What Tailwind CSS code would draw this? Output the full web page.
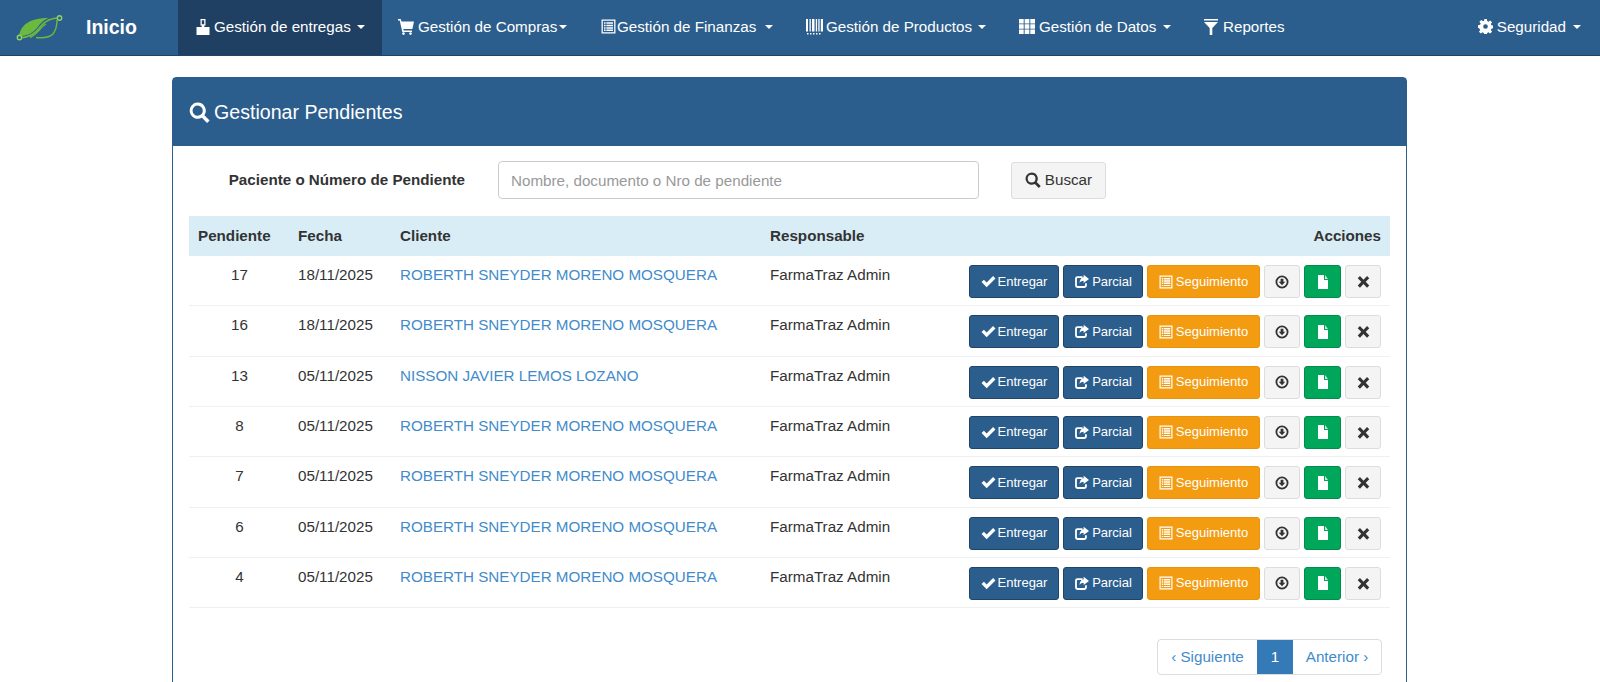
<!DOCTYPE html>
<html lang="es">
<head>
<meta charset="utf-8">
<title>Gestionar Pendientes</title>
<script src="https://cdn.jsdelivr.net/npm/@tailwindcss/browser@4"></script>
</head>
<body class="bg-white text-[15.2px] leading-[20px] text-[#333] font-['Liberation_Sans',Arial,sans-serif] h-screen overflow-hidden">
<svg class="hidden" xmlns="http://www.w3.org/2000/svg">
  <symbol id="i-check" viewBox="0 0 14 14"><path d="M.5 7.500 2.700 5.300 5.300 7.900 11.300 1.900 13.500 4.100 5.300 12.300z" fill="currentColor"/></symbol>
  <symbol id="i-share" viewBox="0 0 14 14"><path d="M8 2H3.200A2.200 2.200 0 0 0 1 4.200v6.600A2.200 2.200 0 0 0 3.200 13h6.600a2.200 2.200 0 0 0 2.200-2.200V8.600h-1.700v2a.7.7 0 0 1-.7.7H3.400a.7.7 0 0 1-.7-.7V4.400a.7.7 0 0 1 .7-.7H8z" fill="currentColor"/><path d="M9 .8l5 3.800L9 8.400V6.200C7.400 6.200 6 6.800 5.200 8.600 5.200 5.600 6.800 3.400 9 3.100z" fill="currentColor"/></symbol>
  <symbol id="i-list" viewBox="0 0 14 14"><path fill-rule="evenodd" d="M.5.500h13v13H.5zM1.700 1.700v10.600h10.600V1.700zM2.800 3h1.500v1.400H2.800zM5 3h6.200v1.400H5zM2.800 5.300h1.500v1.400H2.800zM5 5.300h6.200v1.400H5zM2.800 7.600h1.500V9H2.800zM5 7.600h6.200V9H5zM2.800 9.900h1.500v1.200H2.800zM5 9.900h6.200v1.200H5z" fill="currentColor"/></symbol>
  <symbol id="i-down" viewBox="0 0 14 14"><path fill-rule="evenodd" d="M7 .5a6.500 6.500 0 1 0 0 13 6.500 6.500 0 0 0 0-13zm0 1.800a4.700 4.700 0 1 1 0 9.400 4.700 4.700 0 0 1 0-9.400zM5.600 3.800v3H3.700L7 10.300 10.300 6.800H8.400v-3z" fill="currentColor"/></symbol>
  <symbol id="i-file" viewBox="0 0 14 14"><path d="M2 0h6v5h4v9H2z" fill="currentColor"/><path d="M9 0l3 4H9z" fill="currentColor" opacity=".75"/></symbol>
  <symbol id="i-x" viewBox="0 0 14 14"><path d="M3.200 1.200 7 5l3.800-3.800 2.400 2.400L9.400 7.400l3.800 3.800-2.400 2.400L7 9.800l-3.800 3.800-2.400-2.400 3.800-3.800-3.800-3.800z" fill="currentColor"/></symbol>
  <symbol id="i-search" viewBox="0 0 16 16"><path fill-rule="evenodd" d="M6.600.4a6.200 6.200 0 0 1 5.100 9.700l4 4-1.900 1.900-4-4A6.200 6.200 0 1 1 6.600.4zm0 2.300a3.900 3.900 0 1 0 0 7.800 3.900 3.900 0 0 0 0-7.800z" fill="currentColor"/></symbol>
  <symbol id="i-caret" viewBox="0 0 8 4"><path d="M0 0h8L4 4z" fill="currentColor"/></symbol>
</svg>

<nav class="h-[56px] bg-[#2c5e8d] border-b border-[#1f4468] flex text-white">
  <a class="w-[178px] flex items-center shrink-0 pb-[2px]">
    <svg class="ml-[15px] w-[48px] h-[28px]" viewBox="0 0 48 28" fill="none">
      <path d="M4 23C6 12 14 5 34 5 28 7 26 10 22 15 18 20 12 23 4 23z" fill="#6cb93f"/>
      <path d="M4 25C14 25 21 20 26 13 31 7 36 5 44 5" stroke="#6cb93f" stroke-width="1.600"/>
      <path d="M21 24.500C27 25 34 25 38 21 41 17 42 12 42 7M15 24.500C24 20 24 15 31 11" stroke="#6cb93f" stroke-width="1.400"/>
      <circle cx="4.500" cy="24.500" r="2.200" stroke="#8ed163" stroke-width="1.400" fill="#2c5e8d"/>
      <circle cx="44.500" cy="5" r="2.200" stroke="#8ed163" stroke-width="1.400" fill="#2c5e8d"/>
    </svg>
    <span class="ml-[23px] text-[19.5px] font-bold">Inicio</span>
  </a>
  <a class="w-[204px] bg-[#1f3f63] flex items-center pl-[18px] gap-[4px] shrink-0 pb-[2px]">
    <svg class="w-[14px] h-[16px]" viewBox="0 0 14 16"><path fill-rule="evenodd" d="M4.500 0h5v6.500H8.300V8H13.500v8H.5V8h5.200V6.500H4.500zM5.800 1.300v3.900h2.400V1.300z" fill="currentColor"/></svg>
    <span>Gestión de entregas</span><svg class="w-[8px] h-[4px] ml-[2px]"><use href="#i-caret"/></svg>
  </a>
  <a class="w-[200px] flex items-center pl-[16px] gap-[4px] shrink-0 pb-[2px]">
    <svg class="w-[16px] h-[16px]" viewBox="0 0 16 16"><path d="M0 0h2.700l.8 2.500H16l-1.600 7.500H5.300l.4 1.500H14V13H4.300L1.700 1.500H0z" fill="currentColor"/><circle cx="5.500" cy="14.600" r="1.300" fill="currentColor"/><circle cx="12.500" cy="14.600" r="1.300" fill="currentColor"/></svg>
    <span>Gestión de Compras</span><svg class="w-[8px] h-[4px] -ml-[2px]"><use href="#i-caret"/></svg>
  </a>
  <a class="w-[205px] flex items-center pl-[19px] gap-[1px] shrink-0 pb-[2px]">
    <svg class="w-[15px] h-[15px]"><use href="#i-list"/></svg>
    <span>Gestión de Finanzas</span><svg class="w-[8px] h-[4px] ml-[8px]"><use href="#i-caret"/></svg>
  </a>
  <a class="w-[218px] flex items-center pl-[19px] gap-[3px] shrink-0 pb-[2px]">
    <svg class="w-[17px] h-[16px]" viewBox="0 0 17 16"><path d="M0 0h2v12.500H0zM3.500 0h1.300v12.500H3.500zM6 0h2.500v12.500H6zM9.800 0h1.300v12.500H9.800zM12.300 0h1.300v12.500h-1.300zM14.800 0H17v12.500h-2.200zM1 14h1.500v1.500H1zM4 14h1.500v1.500H4zM7 14h1.500v1.500H7zM10 14h1.500v1.500H10zM13 14h1.500v1.500H13z" fill="currentColor"/></svg>
    <span>Gestión de Productos</span><svg class="w-[8px] h-[4px] ml-[3px]"><use href="#i-caret"/></svg>
  </a>
  <a class="w-[184px] flex items-center pl-[14px] gap-[4px] shrink-0 pb-[2px]">
    <svg class="w-[16px] h-[15px]" viewBox="0 0 16 15"><path d="M0 0h4.700v4.400H0zM5.650 0h4.700v4.400H5.650zM11.300 0H16v4.400h-4.700zM0 5.300h4.700v4.400H0zM5.650 5.300h4.700v4.400H5.650zM11.300 5.300H16v4.400h-4.700zM0 10.600h4.700V15H0zM5.650 10.600h4.700V15H5.650zM11.300 10.600H16V15h-4.700z" fill="currentColor"/></svg>
    <span>Gestión de Datos</span><svg class="w-[8px] h-[4px] ml-[3px]"><use href="#i-caret"/></svg>
  </a>
  <a class="flex items-center pl-[15px] gap-[5px] shrink-0 pb-[2px]">
    <svg class="w-[14px] h-[16px]" viewBox="0 0 14 16"><path d="M0 0h14v1.500H0zM0 3h14L8.300 9V16H5.700V9z" fill="currentColor"/></svg>
    <span>Reportes</span>
  </a>
  <a class="ml-auto flex items-center pr-[19px] gap-[4px] shrink-0 pb-[2px]">
    <svg class="w-[15px] h-[15px]" viewBox="0 0 16 16"><path fill-rule="evenodd" d="M6.600 0h2.800l.4 2.200 1.300.6 1.900-1.300 2 2-1.300 1.900.6 1.300 2.200.4v2.800l-2.200.4-.6 1.300 1.300 1.900-2 2-1.900-1.300-1.300.6-.4 2.200H6.600l-.4-2.200-1.300-.6-1.900 1.300-2-2 1.300-1.900-.6-1.300L0 9.400V6.600l2.200-.4.6-1.300-1.300-1.900 2-2 1.900 1.300 1.300-.6zM8 5.500a2.500 2.500 0 1 0 0 5 2.500 2.500 0 0 0 0-5z" fill="currentColor"/></svg>
    <span>Seguridad</span><svg class="w-[8px] h-[4px] ml-[3px]"><use href="#i-caret"/></svg>
  </a>
</nav>

<main class="ml-[172px] w-[1235px] mt-[21px] border border-[#2c5e8d] rounded-[4px] h-[800px]">
  <header class="h-[68px] bg-[#2c5e8d] text-white flex items-center pl-[16px] gap-[4px] text-[19.6px]">
    <svg class="w-[21px] h-[21px]"><use href="#i-search"/></svg>
    <h1 class="font-normal">Gestionar Pendientes</h1>
  </header>
  <div class="pl-[16px] pr-[16px]">
    <form class="flex items-center h-[70px] pb-[2px]">
      <label class="w-[277px] text-right font-bold pr-[1px]">Paciente o Número de Pendiente</label>
      <input class="ml-[32px] w-[481px] h-[38px] border border-[#ccc] rounded-[4px] px-[12px] text-[15.2px] placeholder:text-[#999]" placeholder="Nombre, documento o Nro de pendiente">
      <button type="button" class="ml-[32px] h-[37px] w-[95px] bg-[#f4f4f4] border border-[#ddd] rounded-[3px] flex items-center justify-center gap-[4px] text-[15.2px]">
        <svg class="w-[16px] h-[16px]"><use href="#i-search"/></svg>Buscar
      </button>
    </form>
    <table class="w-full border-collapse table-fixed">
      <colgroup><col class="w-[101px]"><col class="w-[102px]"><col class="w-[370px]"><col class="w-[190px]"><col></colgroup>
      <thead class="bg-[#d9edf7]">
        <tr class="h-[40px] text-left">
          <th class="pl-[9px] pr-[8px] font-bold">Pendiente</th><th class="px-[8px] font-bold">Fecha</th><th class="px-[8px] font-bold">Cliente</th><th class="px-[8px] font-bold">Responsable</th><th class="pl-[8px] pr-[9px] font-bold text-right">Acciones</th>
        </tr>
      </thead>
      <tbody>
        <tr class="border-b border-[#f0f0f0] align-top">
          <td class="px-[8px] pt-[9px] text-center">17</td><td class="px-[8px] pt-[9px]">18/11/2025</td><td class="px-[8px] pt-[9px]"><a class="text-[#428bca]">ROBERTH SNEYDER MORENO MOSQUERA</a></td><td class="px-[8px] pt-[9px]">FarmaTraz Admin</td>
          <td class="pt-[9px] pb-[7.33px] pr-[9px]"><div class="flex justify-end gap-[4px] text-[13px] leading-[18px] text-white">
            <a class="h-[33px] w-[90px] bg-[#2c5e8d] border border-[#1f4468] rounded-[3px] flex items-center justify-center gap-[2px]"><svg class="w-[15px] h-[15px]"><use href="#i-check"/></svg>Entregar</a>
            <a class="h-[33px] w-[80px] bg-[#2c5e8d] border border-[#1f4468] rounded-[3px] flex items-center justify-center gap-[3px]"><svg class="w-[15px] h-[15px]"><use href="#i-share"/></svg>Parcial</a>
            <a class="h-[33px] w-[113px] bg-[#f39c12] border border-[#e8930c] rounded-[3px] flex items-center justify-center gap-[3px]"><svg class="w-[14px] h-[14px]"><use href="#i-list"/></svg>Seguimiento</a>
            <a class="h-[33px] w-[36px] bg-[#f4f4f4] border border-[#ddd] rounded-[3px] flex items-center justify-center text-[#333]"><svg class="w-[14px] h-[14px]"><use href="#i-down"/></svg></a>
            <a class="h-[33px] w-[37px] bg-[#00a65a] border border-[#008d4c] rounded-[3px] flex items-center justify-center"><svg class="w-[14px] h-[14px]"><use href="#i-file"/></svg></a>
            <a class="h-[33px] w-[36px] bg-[#f4f4f4] border border-[#ddd] rounded-[3px] flex items-center justify-center text-[#333]"><svg class="w-[13px] h-[13px]"><use href="#i-x"/></svg></a>
          </div></td>
        </tr>
        <tr class="border-b border-[#f0f0f0] align-top">
          <td class="px-[8px] pt-[9px] text-center">16</td><td class="px-[8px] pt-[9px]">18/11/2025</td><td class="px-[8px] pt-[9px]"><a class="text-[#428bca]">ROBERTH SNEYDER MORENO MOSQUERA</a></td><td class="px-[8px] pt-[9px]">FarmaTraz Admin</td>
          <td class="pt-[9px] pb-[7.33px] pr-[9px]"><div class="flex justify-end gap-[4px] text-[13px] leading-[18px] text-white">
            <a class="h-[33px] w-[90px] bg-[#2c5e8d] border border-[#1f4468] rounded-[3px] flex items-center justify-center gap-[2px]"><svg class="w-[15px] h-[15px]"><use href="#i-check"/></svg>Entregar</a>
            <a class="h-[33px] w-[80px] bg-[#2c5e8d] border border-[#1f4468] rounded-[3px] flex items-center justify-center gap-[3px]"><svg class="w-[15px] h-[15px]"><use href="#i-share"/></svg>Parcial</a>
            <a class="h-[33px] w-[113px] bg-[#f39c12] border border-[#e8930c] rounded-[3px] flex items-center justify-center gap-[3px]"><svg class="w-[14px] h-[14px]"><use href="#i-list"/></svg>Seguimiento</a>
            <a class="h-[33px] w-[36px] bg-[#f4f4f4] border border-[#ddd] rounded-[3px] flex items-center justify-center text-[#333]"><svg class="w-[14px] h-[14px]"><use href="#i-down"/></svg></a>
            <a class="h-[33px] w-[37px] bg-[#00a65a] border border-[#008d4c] rounded-[3px] flex items-center justify-center"><svg class="w-[14px] h-[14px]"><use href="#i-file"/></svg></a>
            <a class="h-[33px] w-[36px] bg-[#f4f4f4] border border-[#ddd] rounded-[3px] flex items-center justify-center text-[#333]"><svg class="w-[13px] h-[13px]"><use href="#i-x"/></svg></a>
          </div></td>
        </tr>
        <tr class="border-b border-[#f0f0f0] align-top">
          <td class="px-[8px] pt-[9px] text-center">13</td><td class="px-[8px] pt-[9px]">05/11/2025</td><td class="px-[8px] pt-[9px]"><a class="text-[#428bca]">NISSON JAVIER LEMOS LOZANO</a></td><td class="px-[8px] pt-[9px]">FarmaTraz Admin</td>
          <td class="pt-[9px] pb-[7.33px] pr-[9px]"><div class="flex justify-end gap-[4px] text-[13px] leading-[18px] text-white">
            <a class="h-[33px] w-[90px] bg-[#2c5e8d] border border-[#1f4468] rounded-[3px] flex items-center justify-center gap-[2px]"><svg class="w-[15px] h-[15px]"><use href="#i-check"/></svg>Entregar</a>
            <a class="h-[33px] w-[80px] bg-[#2c5e8d] border border-[#1f4468] rounded-[3px] flex items-center justify-center gap-[3px]"><svg class="w-[15px] h-[15px]"><use href="#i-share"/></svg>Parcial</a>
            <a class="h-[33px] w-[113px] bg-[#f39c12] border border-[#e8930c] rounded-[3px] flex items-center justify-center gap-[3px]"><svg class="w-[14px] h-[14px]"><use href="#i-list"/></svg>Seguimiento</a>
            <a class="h-[33px] w-[36px] bg-[#f4f4f4] border border-[#ddd] rounded-[3px] flex items-center justify-center text-[#333]"><svg class="w-[14px] h-[14px]"><use href="#i-down"/></svg></a>
            <a class="h-[33px] w-[37px] bg-[#00a65a] border border-[#008d4c] rounded-[3px] flex items-center justify-center"><svg class="w-[14px] h-[14px]"><use href="#i-file"/></svg></a>
            <a class="h-[33px] w-[36px] bg-[#f4f4f4] border border-[#ddd] rounded-[3px] flex items-center justify-center text-[#333]"><svg class="w-[13px] h-[13px]"><use href="#i-x"/></svg></a>
          </div></td>
        </tr>
        <tr class="border-b border-[#f0f0f0] align-top">
          <td class="px-[8px] pt-[9px] text-center">8</td><td class="px-[8px] pt-[9px]">05/11/2025</td><td class="px-[8px] pt-[9px]"><a class="text-[#428bca]">ROBERTH SNEYDER MORENO MOSQUERA</a></td><td class="px-[8px] pt-[9px]">FarmaTraz Admin</td>
          <td class="pt-[9px] pb-[7.33px] pr-[9px]"><div class="flex justify-end gap-[4px] text-[13px] leading-[18px] text-white">
            <a class="h-[33px] w-[90px] bg-[#2c5e8d] border border-[#1f4468] rounded-[3px] flex items-center justify-center gap-[2px]"><svg class="w-[15px] h-[15px]"><use href="#i-check"/></svg>Entregar</a>
            <a class="h-[33px] w-[80px] bg-[#2c5e8d] border border-[#1f4468] rounded-[3px] flex items-center justify-center gap-[3px]"><svg class="w-[15px] h-[15px]"><use href="#i-share"/></svg>Parcial</a>
            <a class="h-[33px] w-[113px] bg-[#f39c12] border border-[#e8930c] rounded-[3px] flex items-center justify-center gap-[3px]"><svg class="w-[14px] h-[14px]"><use href="#i-list"/></svg>Seguimiento</a>
            <a class="h-[33px] w-[36px] bg-[#f4f4f4] border border-[#ddd] rounded-[3px] flex items-center justify-center text-[#333]"><svg class="w-[14px] h-[14px]"><use href="#i-down"/></svg></a>
            <a class="h-[33px] w-[37px] bg-[#00a65a] border border-[#008d4c] rounded-[3px] flex items-center justify-center"><svg class="w-[14px] h-[14px]"><use href="#i-file"/></svg></a>
            <a class="h-[33px] w-[36px] bg-[#f4f4f4] border border-[#ddd] rounded-[3px] flex items-center justify-center text-[#333]"><svg class="w-[13px] h-[13px]"><use href="#i-x"/></svg></a>
          </div></td>
        </tr>
        <tr class="border-b border-[#f0f0f0] align-top">
          <td class="px-[8px] pt-[9px] text-center">7</td><td class="px-[8px] pt-[9px]">05/11/2025</td><td class="px-[8px] pt-[9px]"><a class="text-[#428bca]">ROBERTH SNEYDER MORENO MOSQUERA</a></td><td class="px-[8px] pt-[9px]">FarmaTraz Admin</td>
          <td class="pt-[9px] pb-[7.33px] pr-[9px]"><div class="flex justify-end gap-[4px] text-[13px] leading-[18px] text-white">
            <a class="h-[33px] w-[90px] bg-[#2c5e8d] border border-[#1f4468] rounded-[3px] flex items-center justify-center gap-[2px]"><svg class="w-[15px] h-[15px]"><use href="#i-check"/></svg>Entregar</a>
            <a class="h-[33px] w-[80px] bg-[#2c5e8d] border border-[#1f4468] rounded-[3px] flex items-center justify-center gap-[3px]"><svg class="w-[15px] h-[15px]"><use href="#i-share"/></svg>Parcial</a>
            <a class="h-[33px] w-[113px] bg-[#f39c12] border border-[#e8930c] rounded-[3px] flex items-center justify-center gap-[3px]"><svg class="w-[14px] h-[14px]"><use href="#i-list"/></svg>Seguimiento</a>
            <a class="h-[33px] w-[36px] bg-[#f4f4f4] border border-[#ddd] rounded-[3px] flex items-center justify-center text-[#333]"><svg class="w-[14px] h-[14px]"><use href="#i-down"/></svg></a>
            <a class="h-[33px] w-[37px] bg-[#00a65a] border border-[#008d4c] rounded-[3px] flex items-center justify-center"><svg class="w-[14px] h-[14px]"><use href="#i-file"/></svg></a>
            <a class="h-[33px] w-[36px] bg-[#f4f4f4] border border-[#ddd] rounded-[3px] flex items-center justify-center text-[#333]"><svg class="w-[13px] h-[13px]"><use href="#i-x"/></svg></a>
          </div></td>
        </tr>
        <tr class="border-b border-[#f0f0f0] align-top">
          <td class="px-[8px] pt-[9px] text-center">6</td><td class="px-[8px] pt-[9px]">05/11/2025</td><td class="px-[8px] pt-[9px]"><a class="text-[#428bca]">ROBERTH SNEYDER MORENO MOSQUERA</a></td><td class="px-[8px] pt-[9px]">FarmaTraz Admin</td>
          <td class="pt-[9px] pb-[7.33px] pr-[9px]"><div class="flex justify-end gap-[4px] text-[13px] leading-[18px] text-white">
            <a class="h-[33px] w-[90px] bg-[#2c5e8d] border border-[#1f4468] rounded-[3px] flex items-center justify-center gap-[2px]"><svg class="w-[15px] h-[15px]"><use href="#i-check"/></svg>Entregar</a>
            <a class="h-[33px] w-[80px] bg-[#2c5e8d] border border-[#1f4468] rounded-[3px] flex items-center justify-center gap-[3px]"><svg class="w-[15px] h-[15px]"><use href="#i-share"/></svg>Parcial</a>
            <a class="h-[33px] w-[113px] bg-[#f39c12] border border-[#e8930c] rounded-[3px] flex items-center justify-center gap-[3px]"><svg class="w-[14px] h-[14px]"><use href="#i-list"/></svg>Seguimiento</a>
            <a class="h-[33px] w-[36px] bg-[#f4f4f4] border border-[#ddd] rounded-[3px] flex items-center justify-center text-[#333]"><svg class="w-[14px] h-[14px]"><use href="#i-down"/></svg></a>
            <a class="h-[33px] w-[37px] bg-[#00a65a] border border-[#008d4c] rounded-[3px] flex items-center justify-center"><svg class="w-[14px] h-[14px]"><use href="#i-file"/></svg></a>
            <a class="h-[33px] w-[36px] bg-[#f4f4f4] border border-[#ddd] rounded-[3px] flex items-center justify-center text-[#333]"><svg class="w-[13px] h-[13px]"><use href="#i-x"/></svg></a>
          </div></td>
        </tr>
        <tr class="border-b border-[#f0f0f0] align-top">
          <td class="px-[8px] pt-[9px] text-center">4</td><td class="px-[8px] pt-[9px]">05/11/2025</td><td class="px-[8px] pt-[9px]"><a class="text-[#428bca]">ROBERTH SNEYDER MORENO MOSQUERA</a></td><td class="px-[8px] pt-[9px]">FarmaTraz Admin</td>
          <td class="pt-[9px] pb-[7.33px] pr-[9px]"><div class="flex justify-end gap-[4px] text-[13px] leading-[18px] text-white">
            <a class="h-[33px] w-[90px] bg-[#2c5e8d] border border-[#1f4468] rounded-[3px] flex items-center justify-center gap-[2px]"><svg class="w-[15px] h-[15px]"><use href="#i-check"/></svg>Entregar</a>
            <a class="h-[33px] w-[80px] bg-[#2c5e8d] border border-[#1f4468] rounded-[3px] flex items-center justify-center gap-[3px]"><svg class="w-[15px] h-[15px]"><use href="#i-share"/></svg>Parcial</a>
            <a class="h-[33px] w-[113px] bg-[#f39c12] border border-[#e8930c] rounded-[3px] flex items-center justify-center gap-[3px]"><svg class="w-[14px] h-[14px]"><use href="#i-list"/></svg>Seguimiento</a>
            <a class="h-[33px] w-[36px] bg-[#f4f4f4] border border-[#ddd] rounded-[3px] flex items-center justify-center text-[#333]"><svg class="w-[14px] h-[14px]"><use href="#i-down"/></svg></a>
            <a class="h-[33px] w-[37px] bg-[#00a65a] border border-[#008d4c] rounded-[3px] flex items-center justify-center"><svg class="w-[14px] h-[14px]"><use href="#i-file"/></svg></a>
            <a class="h-[33px] w-[36px] bg-[#f4f4f4] border border-[#ddd] rounded-[3px] flex items-center justify-center text-[#333]"><svg class="w-[13px] h-[13px]"><use href="#i-x"/></svg></a>
          </div></td>
        </tr>
      </tbody>
    </table>
    <div class="flex justify-end pr-[8px] mt-[31px]">
      <div class="flex h-[36px] border border-[#ddd] rounded-[4px] text-[#428bca] overflow-hidden">
        <a class="w-[99px] flex items-center justify-center">‹ Siguiente</a>
        <a class="w-[36px] flex items-center justify-center bg-[#337ab7] text-white">1</a>
        <a class="w-[88px] flex items-center justify-center">Anterior ›</a>
      </div>
    </div>
  </div>
</main>
</body>
</html>
